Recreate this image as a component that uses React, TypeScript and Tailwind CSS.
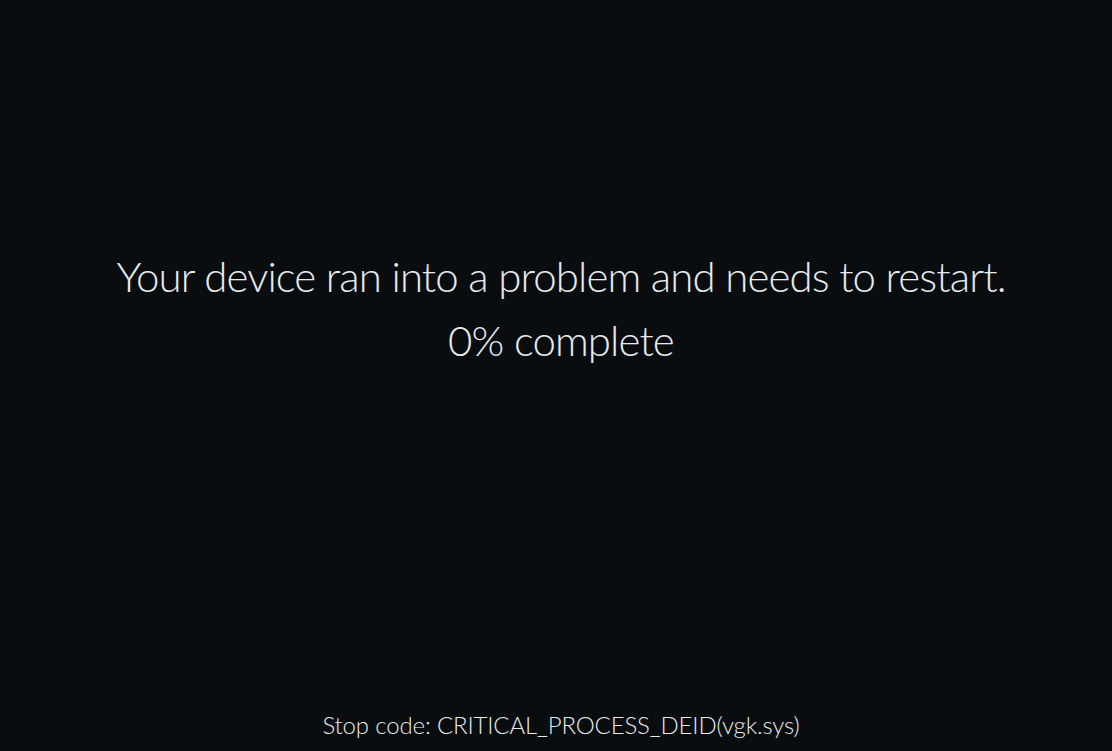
export default function App() {
  return (
    <div
      className="w-[1112px] h-[751px] bg-[#0a0d10] text-[#e8eaec] flex flex-col items-center font-light pl-[10px]"
      style={{ fontFamily: "Lato, 'Noto Sans', sans-serif" }}
    >
      <div className="mt-[246px] flex flex-col items-center">
        <div className="text-[42px] leading-[60px] tracking-[-0.9px]">Your device ran into a problem and needs to restart.</div>
        <div className="text-[42px] leading-[60px] mt-[4px] tracking-[-0.9px]">0% complete</div>
      </div>
      <div className="flex-1" />
      <div className="text-[24px] leading-[30px] mb-[11px] tracking-[-0.15px]">Stop code: CRITICAL_PROCESS_DEID(vgk.sys)</div>
    </div>
  );
}
